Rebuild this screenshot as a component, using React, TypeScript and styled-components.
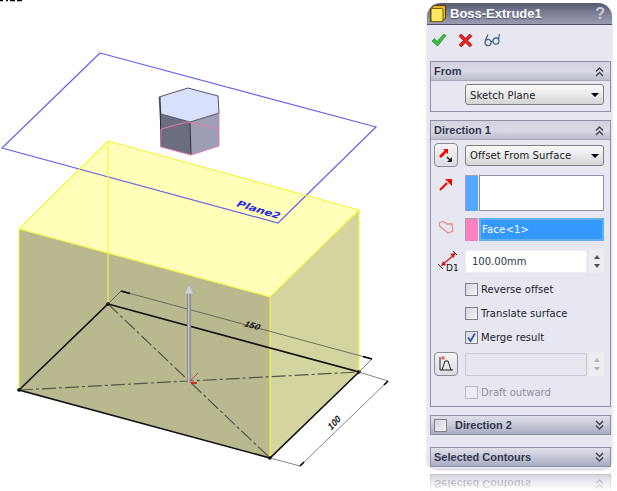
import { ReactNode } from "react";
import styled, { createGlobalStyle } from "styled-components";

const Global = createGlobalStyle`
  html, body { margin: 0; padding: 0; background: #fff; overflow: hidden; }
  body { font-family: "DejaVu Sans", "Liberation Sans", sans-serif; }
`;

const Root = styled.div`
  display: flex;
  width: 617px;
  height: 491px;
  overflow: hidden;
  background: #fff;
`;

const Viewport = styled.svg`
  display: block;
  flex: none;
  width: 427px;
  height: 491px;
`;

const Side = styled.div`
  flex: none;
  width: 185px;
  padding-top: 3px;
`;

const Panel = styled.div`
  background: #e6e7f0;
  border-radius: 14px 14px 10px 10px;
  padding-bottom: 2px;
  box-shadow: 0 1px 2px #c8c9d2;
`;

const TitleBar = styled.div`
  display: flex;
  align-items: center;
  height: 22px;
  padding: 0 7px 0 2px;
  gap: 3px;
  border-radius: 14px 14px 0 0;
  border-bottom: 1px solid #4a4d66;
  box-sizing: border-box;
  background: linear-gradient(#55576f 0%, #7a7c94 45%, #9a9cb0 100%);
  color: #fff;
  font-family: "Liberation Sans", sans-serif;
  font-size: 13px;
  font-weight: 700;
`;

const TitleText = styled.span`
  flex: 1;
  text-shadow: 0 1px 1px #4a4d66;
`;

const Help = styled.span`
  color: #c9cad4;
  font-size: 16px;
  font-weight: 700;
`;

const Actions = styled.div`
  display: flex;
  align-items: center;
  height: 36px;
  box-sizing: border-box;
  padding: 0 0 6px 4px;
  gap: 11px;
`;

const Stack = styled.div`
  padding: 0 1px 0 3px;
  display: flex;
  flex-direction: column;
`;

const Section = styled.section<{ $top?: number }>`
  margin-top: ${(p) => p.$top ?? 0}px;
  border: 1px solid #8d90a3;
  background: #e6e7f0;
`;

const Head = styled.div<{ $closed?: boolean }>`
  display: flex;
  align-items: center;
  height: 18px;
  padding: 0 5px 0 3px;
  background: ${(p) =>
    p.$closed
      ? "linear-gradient(#dfe0ea 0%, #c9cbda 45%, #a9acc0 100%)"
      : "linear-gradient(#d2d3df 0%, #d9dae4 50%, #bcbecd 100%)"};
  font-family: "Liberation Sans", sans-serif;
  font-size: 11px;
  font-weight: 700;
  color: #33364f;
`;

const HeadLabel = styled.span<{ $indent?: number }>`
  flex: 1;
  margin-left: ${(p) => p.$indent ?? 0}px;
`;

const Body = styled.div<{ $bottom: number }>`
  border-top: 1px solid #a6a8ba;
  padding-bottom: ${(p) => p.$bottom}px;
`;

const Row = styled.div<{ $top: number }>`
  display: flex;
  align-items: center;
  margin-top: ${(p) => p.$top}px;
  padding-right: 6px;
`;

const Slot = styled.div<{ $alignTop?: number }>`
  flex: none;
  width: 34px;
  display: flex;
  justify-content: center;
  padding-right: 4px;
  box-sizing: border-box;
  align-self: ${(p) => (p.$alignTop === undefined ? "auto" : "flex-start")};
  margin-top: ${(p) => p.$alignTop ?? 0}px;
`;

const Select = styled.div`
  flex: 1;
  height: 21px;
  box-sizing: border-box;
  display: flex;
  align-items: center;
  justify-content: space-between;
  padding: 1px 4px 0 4px;
  border: 1px solid #7d7f87;
  border-radius: 3px;
  background: linear-gradient(#fafafa 0%, #ececec 45%, #d4d4d4 100%);
  font-size: 10px;
  letter-spacing: 0.1px;
  color: #1c1c28;
`;

const Caret = styled.span`
  width: 0;
  height: 0;
  border-left: 4px solid transparent;
  border-right: 4px solid transparent;
  border-top: 4px solid #000;
`;

const ToolButton = styled.div`
  width: 24px;
  height: 24px;
  box-sizing: border-box;
  display: flex;
  align-items: center;
  justify-content: center;
  border: 1px solid #8a8c96;
  border-radius: 4px;
  background: linear-gradient(#f4f4f6, #dcdde2);
`;

const Swatch = styled.div<{ $color: string }>`
  flex: none;
  width: 13px;
  margin-right: 1px;
  align-self: stretch;
  background: ${(p) => p.$color};
  border-left: 1px solid #9ea0ae;
  border-top: 1px solid #9ea0ae;
  box-sizing: border-box;
`;

const ListBox = styled.div`
  flex: 1;
  height: 36px;
  box-sizing: border-box;
  border: 1px solid #8d90a3;
  background: #fff;
`;

const ActiveBox = styled.div`
  flex: 1;
  height: 23px;
  box-sizing: border-box;
  border: 2px solid #63b0e8;
  background: #3399ff;
  color: #fff;
  display: flex;
  align-items: center;
  padding-left: 1px;
  font-size: 10px;
  letter-spacing: 0.2px;
`;

const Field = styled.div<{ $disabled?: boolean }>`
  flex: none;
  width: 122px;
  height: 23px;
  box-sizing: border-box;
  padding-left: 6px;
  display: flex;
  align-items: center;
  border: 1px solid ${(p) => (p.$disabled ? "#c9cad3" : "#eeeef3")};
  border-radius: 2px;
  background: ${(p) => (p.$disabled ? "#e6e7ee" : "#fff")};
  font-size: 10px;
  color: #33364f;
`;

const Spinner = styled.div`
  flex: none;
  width: 15px;
  height: 24px;
  margin-left: 2px;
  background: #eeeef1;
  display: flex;
  flex-direction: column;
  justify-content: space-around;
  align-items: center;
  padding: 3px 0;
  box-sizing: border-box;
`;

const Tri = styled.span<{ $up?: boolean; $dim?: boolean }>`
  width: 0;
  height: 0;
  border-left: 3.5px solid transparent;
  border-right: 3.5px solid transparent;
  ${(p) => (p.$up ? "border-bottom" : "border-top")}: 4px solid ${(p) => (p.$dim ? "#b4b5bc" : "#50525c")};
`;

const CheckRow = styled.label<{ $top: number; $disabled?: boolean }>`
  display: flex;
  align-items: center;
  height: 14px;
  margin: ${(p) => p.$top}px 0 0 34px;
  gap: 3px;
  font-size: 10px;
  letter-spacing: 0.05px;
  color: ${(p) => (p.$disabled ? "#8f909a" : "#1c1c28")};
`;

const Box = styled.span<{ $disabled?: boolean }>`
  flex: none;
  width: 13px;
  height: 13px;
  box-sizing: border-box;
  display: flex;
  align-items: center;
  justify-content: center;
  border: 1px solid ${(p) => (p.$disabled ? "#b9bac4" : "#7f818c")};
  background: ${(p) => (p.$disabled ? "#ecedf2" : "linear-gradient(135deg, #d2d3da, #f6f6f8)")};
`;

const Reflection = styled.div`
  margin: 3px 1px 0 3px;
  height: 22px;
  overflow: hidden;
  transform: scaleY(-1);
  -webkit-mask-image: linear-gradient(to top, #000 0%, transparent 95%);
  mask-image: linear-gradient(to top, #000 0%, transparent 95%);
  opacity: 0.6;
`;

const Chevrons = ({ down }: { down?: boolean }) => (
  <svg width="11" height="11" viewBox="0 0 11 11" fill="none" stroke="#3c3f4b" strokeWidth="1.3">
    {down ? (
      <>
        <path d="M2 1 5.5 4.5 9 1" />
        <path d="M2 5.5 5.5 9 9 5.5" />
      </>
    ) : (
      <>
        <path d="M2 5.5 5.5 2 9 5.5" />
        <path d="M2 10 5.5 6.5 9 10" />
      </>
    )}
  </svg>
);

const SectionHead = ({ children, down }: { children: ReactNode; down?: boolean }) => (
  <Head $closed={down}>
    {children}
    <Chevrons down={down} />
  </Head>
);

const Model = () => (
  <Viewport viewBox="0 0 427 491">
    {/* clipped text at the very top */}
    <path d="M0 0.5h3M6 0.5h2M10 0.5h5M17 0.5h5" stroke="#000" strokeWidth="1.4" />

    {/* extrude faces */}
    <polygon points="19,229 108,141 359,210 270,297" fill="#ffffb9" />
    <polygon points="19,229 270,297 270,458 19,390" fill="#b9b88f" />
    <polygon points="270,297 359,210 359,372 270,458" fill="#d4d4a0" />

    {/* plane */}
    <polygon points="100,53 376,127 278,223 2,148" fill="none" stroke="#6464e8" strokeWidth="1.2" />

    {/* hex boss */}
    <polygon points="159,97 161,147 191,155 190,122 161,114" fill="#6b6d80" />
    <polygon points="190,122 219,113 219,146 191,155" fill="#9c9eb4" />
    <polygon points="159,97 188,88 218,96 219,113 190,122 161,114" fill="#d9e0fb" />
    <path d="M159 97 188 88 218 96 219 113 190 122 161 114Z" fill="none" stroke="#55566a" strokeWidth="1" />
    <path d="M160 97 161 147M190 122 191 155" stroke="#2c2d38" strokeWidth="1" />
    <path d="M161 129 187 122 218 129M219 113V146L191 155 161 147V129" fill="none" stroke="#e080b0" strokeWidth="1" />

    {/* yellow edges */}
    <path
      d="M108 141 19 229 270 297 359 210 108 141M19 229V390M270 297V458M359 210V372M108 141V304"
      fill="none"
      stroke="#f4f43a"
      strokeWidth="1.1"
    />

    {/* sketch on the bottom face */}
    <path d="M108 304 359 372 270 458 19 390Z" fill="none" stroke="#111" strokeWidth="1.6" />
    <path
      d="M108 304 270 458M19 390 359 372"
      fill="none"
      stroke="#55554a"
      strokeWidth="1.2"
      strokeDasharray="14 3 3 3"
    />
    <circle cx="108" cy="304" r="1.8" fill="#000" />
    <circle cx="19" cy="390" r="1.8" fill="#000" />
    <circle cx="359" cy="372" r="1.8" fill="#000" />
    <circle cx="270" cy="458" r="1.8" fill="#000" />

    {/* dimension 150 */}
    <path d="M108 304 121 291 372 359 359 372" fill="none" stroke="#55554a" strokeWidth="0.8" />
    <path d="M121 291 130 293.5M372 359 363 356.5" stroke="#000" strokeWidth="1.6" />
    <text x="0" y="0" transform="translate(243 326) rotate(15) skewX(-20) scale(0.95 0.85)" fontFamily="Liberation Sans" fontSize="10" fontWeight="700" fill="#111">
      150
    </text>

    {/* dimension 100 */}
    <path d="M359 372 388 381 300 466 270 458" fill="none" stroke="#666" strokeWidth="0.8" />
    <path d="M388 381 384 385M300 466 304 462" stroke="#000" strokeWidth="1.6" />
    <text x="0" y="0" transform="translate(331 431) rotate(-47) skewX(-15) scale(0.9 0.95)" fontFamily="Liberation Sans" fontSize="10" fontWeight="700" fill="#111">
      100
    </text>

    <text x="0" y="0" transform="translate(236 206) rotate(17) skewX(-8) scale(1.3 1)" fontFamily="DejaVu Sans" fontSize="9" fontWeight="700" fontStyle="italic" fill="#2a2ae8">
      Plane2
    </text>

    {/* direction arrow */}
    <rect x="187" y="293" width="4" height="90" fill="#8d8d98" />
    <rect x="188" y="293" width="1.4" height="90" fill="#c2c2c9" />
    <polygon points="184,294 189,284 194,294 189,294" fill="#cfcfd4" stroke="#9a9aa0" strokeWidth="0.5" />

    {/* origin */}
    <path d="M190 381 198 373" stroke="#e03030" strokeWidth="0.9" />
    <path d="M191 383H197" stroke="#e01010" strokeWidth="1.6" />
  </Viewport>
);

const FeatureIcon = () => (
  <svg width="18" height="19" viewBox="0 0 18 19">
    <path d="M1.5 5 5 1.5H16.5V14L13.5 17.5H1.5Z" fill="#e8b530" stroke="#4a3808" />
    <rect x="2" y="4.5" width="12" height="13" rx="1.5" fill="#ffe95e" stroke="#7a5c0a" />
  </svg>
);

const CheckIcon = () => (
  <svg width="16" height="14" viewBox="0 0 16 14">
    <path d="M1 8 3.5 5.5 6 8.5 13 1 15 2.5 6.5 13Z" fill="#35c23c" stroke="#1e7a2a" strokeWidth="0.7" />
  </svg>
);

const CrossIcon = () => (
  <svg width="15" height="15" viewBox="0 0 14 14">
    <path d="M1 3 3 1 7 5 11 1 13 3 9 7 13 11 11 13 7 9 3 13 1 11 5 7Z" fill="#ee2020" stroke="#8e1414" strokeWidth="0.7" />
  </svg>
);

const GlassesIcon = () => (
  <svg width="17" height="14" viewBox="0 0 17 14" fill="#dfeaf8" stroke="#3a5a80" strokeWidth="1.2">
    <ellipse cx="4" cy="9.5" rx="3" ry="3.2" />
    <ellipse cx="12" cy="8" rx="3" ry="3.2" />
    <path d="M1.5 7 4 1.5M14.5 6 15.5 1M7 9 9 8" fill="none" />
  </svg>
);

const ReverseIcon = () => (
  <svg width="16" height="16" viewBox="0 0 16 16">
    <path d="M2 10 8 4" stroke="#f00" strokeWidth="2.6" />
    <path d="M5 2H10V7Z" fill="#f00" />
    <path d="M9 10 12.5 13.5" stroke="#222" strokeWidth="1.4" />
    <path d="M9 14H14V9Z" fill="#222" transform="translate(0 1)" />
  </svg>
);

const ArrowIcon = () => (
  <svg width="14" height="14" viewBox="0 0 14 14">
    <path d="M1 13 8 6" stroke="#f00" strokeWidth="2.2" />
    <path d="M6 2H13V9Z" fill="#f00" />
  </svg>
);

const ContourIcon = () => (
  <svg width="16" height="15" viewBox="0 0 16 15">
    <path d="M1.5 2.5 5 1.5 9 4 14 4 15 11 10 13 5 9 1.5 6Z" fill="none" stroke="#ec8c8c" strokeWidth="1.3" />
  </svg>
);

const DepthIcon = () => (
  <svg width="24" height="22" viewBox="0 0 24 22">
    <path d="M8 15 20 5" stroke="#e01010" strokeWidth="1.2" />
    <path d="M16 4 21 3 20 8ZM7 16 12 15 9 11Z" fill="#e01010" />
    <path d="M19 1 23 5M4 14 9 19" stroke="#222" strokeWidth="1" />
    <text x="12" y="21" fontFamily="DejaVu Sans" fontSize="9" fill="#111">D1</text>
  </svg>
);

const DraftIcon = () => (
  <svg width="16" height="16" viewBox="0 0 16 16" fill="none" stroke="#222" strokeWidth="1">
    <path d="M2 1V14H15" />
    <path d="M4 14 7 5H10L13 14" />
    <rect x="4" y="1" width="2" height="2" stroke="#e02020" strokeWidth="0.8" />
  </svg>
);

const Tick = () => (
  <svg width="11" height="11" viewBox="0 0 11 11" fill="none" stroke="#3a56b0" strokeWidth="1.8">
    <path d="M2 5.5 4.5 9 9 1.5" />
  </svg>
);

export default function App() {
  return (
    <Root>
      <Global />
      <Model />
      <Side>
        <Panel>
          <TitleBar>
            <FeatureIcon />
            <TitleText>Boss-Extrude1</TitleText>
            <Help>?</Help>
          </TitleBar>
          <Actions>
            <CheckIcon />
            <CrossIcon />
            <GlassesIcon />
          </Actions>
          <Stack>
            <Section>
              <SectionHead>
                <HeadLabel>From</HeadLabel>
              </SectionHead>
              <Body $bottom={6}>
                <Row $top={3}>
                  <Slot />
                  <Select>
                    Sketch Plane
                    <Caret />
                  </Select>
                </Row>
              </Body>
            </Section>

            <Section $top={8}>
              <SectionHead>
                <HeadLabel>Direction 1</HeadLabel>
              </SectionHead>
              <Body $bottom={7}>
                <Row $top={3}>
                  <Slot>
                    <ToolButton>
                      <ReverseIcon />
                    </ToolButton>
                  </Slot>
                  <Select>
                    Offset From Surface
                    <Caret />
                  </Select>
                </Row>
                <Row $top={8}>
                  <Slot $alignTop={2}>
                    <ArrowIcon />
                  </Slot>
                  <Swatch $color="#54a8ff" />
                  <ListBox />
                </Row>
                <Row $top={7}>
                  <Slot $alignTop={2}>
                    <ContourIcon />
                  </Slot>
                  <Swatch $color="#ff80c0" />
                  <ActiveBox>Face&lt;1&gt;</ActiveBox>
                </Row>
                <Row $top={8}>
                  <Slot>
                    <DepthIcon />
                  </Slot>
                  <Field>100.00mm</Field>
                  <Spinner>
                    <Tri $up />
                    <Tri />
                  </Spinner>
                </Row>
                <CheckRow $top={9}>
                  <Box />
                  Reverse offset
                </CheckRow>
                <CheckRow $top={10}>
                  <Box />
                  Translate surface
                </CheckRow>
                <CheckRow $top={10}>
                  <Box>
                    <Tick />
                  </Box>
                  Merge result
                </CheckRow>
                <Row $top={8}>
                  <Slot>
                    <ToolButton>
                      <DraftIcon />
                    </ToolButton>
                  </Slot>
                  <Field $disabled />
                  <Spinner>
                    <Tri $up $dim />
                    <Tri $dim />
                  </Spinner>
                </Row>
                <CheckRow $top={9} $disabled>
                  <Box $disabled />
                  Draft outward
                </CheckRow>
              </Body>
            </Section>

            <Section $top={8}>
              <SectionHead down>
                <Box />
                <HeadLabel $indent={8}>Direction 2</HeadLabel>
              </SectionHead>
            </Section>

            <Section $top={12}>
              <SectionHead down>
                <HeadLabel>Selected Contours</HeadLabel>
              </SectionHead>
            </Section>
          </Stack>
        </Panel>
        <Reflection>
          <Section>
            <SectionHead down>
              <HeadLabel>Selected Contours</HeadLabel>
            </SectionHead>
          </Section>
        </Reflection>
      </Side>
    </Root>
  );
}
